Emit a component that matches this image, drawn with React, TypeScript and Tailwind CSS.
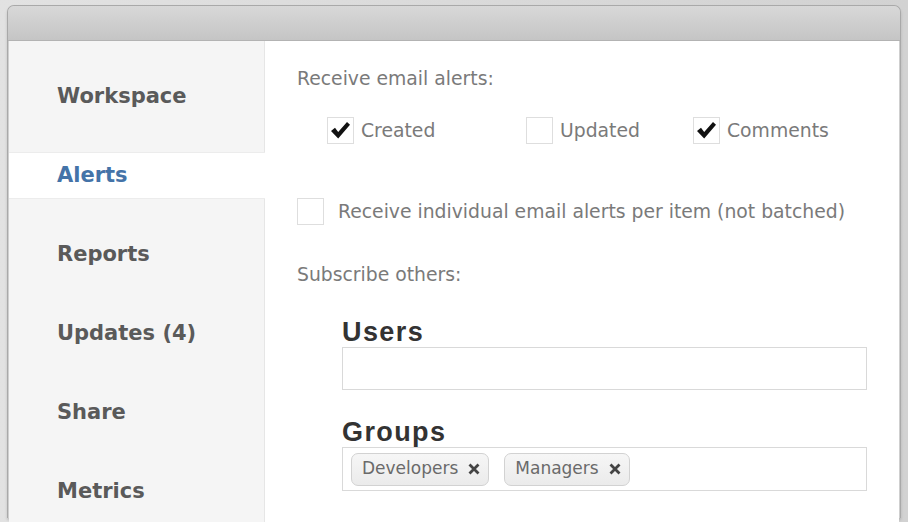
import { ReactNode } from 'react';

const nav = ['Workspace', 'Alerts', 'Reports', 'Updates (4)', 'Share', 'Metrics'];

function Check({ checked }: { checked?: boolean }) {
  return (
    <span className="flex h-[27px] w-[27px] shrink-0 items-center justify-center border border-[#dedede] bg-white">
      {checked && (
        <svg width="21" height="19" viewBox="0 0 21 19">
          <path d="M1 10 L5 6.8 L8.2 11 L17 1 L20 3.8 L8.2 17.5 Z" fill="#111" />
        </svg>
      )}
    </span>
  );
}

function Option({ checked, children }: { checked?: boolean; children: ReactNode }) {
  return (
    <label className="flex items-center gap-[7px]">
      <Check checked={checked} />
      <span>{children}</span>
    </label>
  );
}

function Tag({ name }: { name: string }) {
  return (
    <span className="flex h-[33px] items-center gap-[10px] rounded-[7px] border border-[#d2d2d2] bg-gradient-to-b from-[#f6f6f6] to-[#ebebeb] pl-[10px] pr-[8px] text-[17px] text-[#6a6a6a]">
      {name}
      <svg width="12" height="12" viewBox="0 0 12 12">
        <path d="M1.5 1.5 L10.5 10.5 M10.5 1.5 L1.5 10.5" stroke="#444" strokeWidth="2.8" />
      </svg>
    </span>
  );
}

export default function App() {
  return (
    <div className="h-[522px] w-[908px] overflow-hidden bg-gradient-to-r from-[#e2e2e2] to-[#d2d2d2] pl-[7px] pr-[7px] pt-[5px] font-['DejaVu_Sans',sans-serif]">
      <div className="flex h-[513px] flex-col rounded-t-[7px] border border-b-0 border-[#a9a9a9] bg-[#cfcfcf] px-[1px] shadow-[0_2px_3px_rgba(0,0,0,0.15)]">
        <div className="-mx-[1px] h-[35px] shrink-0 rounded-t-[6px] border-b border-[#b3b3b3] bg-gradient-to-b from-[#d8d8d8] to-[#c5c5c5]" />
        <div className="flex flex-1 bg-white">
          {/* sidebar */}
          <div className="w-[256px] shrink-0 border-r border-[#e6e6e6] bg-[#f5f5f5] pt-[16px]">
            {nav.map((item) =>
              item === 'Alerts' ? (
                <div key={item} className="flex h-[79px] items-center">
                  <div className="relative -mr-px flex h-[47px] w-[256px] items-center border-y border-[#ececec] bg-white pl-[48px] text-[21px] font-bold text-[#4473a8]">
                    {item}
                  </div>
                </div>
              ) : (
                <div key={item} className="flex h-[79px] items-center pl-[48px] text-[21px] font-bold text-[#5a5a5a]">
                  {item}
                </div>
              )
            )}
          </div>
          {/* main */}
          <div className="flex-1 pl-[32px] pt-[27px] text-[18.8px] text-[#7a7a7a]">
            <div className="leading-[22px]">Receive email alerts:</div>
            <div className="mt-[27px] flex pl-[30px] leading-[22px]">
              <div className="w-[199px]"><Option checked>Created</Option></div>
              <div className="w-[167px]"><Option>Updated</Option></div>
              <Option checked>Comments</Option>
            </div>
            <label className="mt-[54px] flex items-center gap-[14px] leading-[22px]">
              <Check />
              <span>Receive individual email alerts per item (not batched)</span>
            </label>
            <div className="mt-[39px] leading-[22px]">Subscribe others:</div>
            <div className="ml-[45px] mt-[31px] w-[525px]">
              <div className="font-['Liberation_Sans',sans-serif] text-[27px] font-bold leading-[30px] tracking-[1.4px] text-[#333]">Users</div>
              <div className="h-[43px] border border-[#d9d9d9] bg-white" />
              <div className="mt-[27px] font-['Liberation_Sans',sans-serif] text-[27px] font-bold leading-[30px] tracking-[1.4px] text-[#333]">Groups</div>
              <div className="flex h-[44px] items-center gap-[15px] border border-[#d9d9d9] bg-white px-[8px]">
                <Tag name="Developers" />
                <Tag name="Managers" />
              </div>
            </div>
          </div>
        </div>
      </div>
    </div>
  );
}
